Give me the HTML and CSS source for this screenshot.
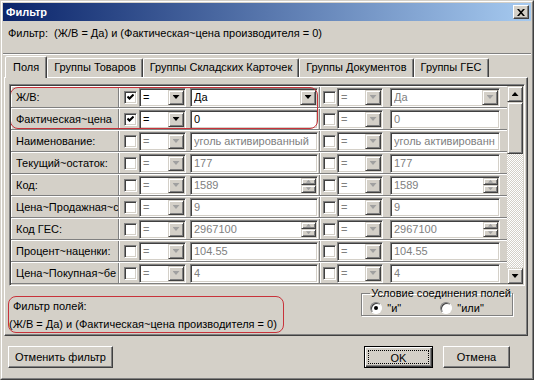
FILE: index.html
```html
<!DOCTYPE html>
<html lang="ru">
<head>
    <meta charset="UTF-8">
    <title>Фильтр</title>
    <link rel="stylesheet" href="styles.css">
</head>
<body>
<div class="window">
  <div class="frame">
    <div class="titlebar">
        <span class="title">Фильтр</span>
        <span class="close">
            <svg width="8" height="7" viewBox="0 0 8 7"><path d="M0 0h2l2 2.3L6 0h2L5 3.5 8 7H6L4 4.7 2 7H0l3-3.5z" fill="#000"/></svg>
        </span>
    </div>
    <div class="summary">Фильтр:&nbsp; (Ж/В = Да) и (Фактическая~цена производителя = 0)</div>
    <div class="divider"></div>

    <div class="tabs">
        <div class="tab active">Поля</div>
        <div class="tab">Группы Товаров</div>
        <div class="tab">Группы Складских Карточек</div>
        <div class="tab">Группы Документов</div>
        <div class="tab">Группы ГЕС</div>
    </div>

    <div class="panel">
        <div class="grid">
            <div class="rows">
                <div class="row">
                    <div class="name">Ж/В:</div>
                    <div class="cond first">
                        <span class="check"><svg width="7" height="7" viewBox="0 0 7 7"><path d="M0.5 2.5l2 2 4-4" stroke="#000" stroke-width="2" fill="none"/></svg></span>
                        <div class="combo"><span class="text">=</span><i class="drop"></i></div>
                        <div class="edit"><span class="text">Да</span><i class="drop"></i></div>
                    </div>
                    <div class="cond second">
                        <span class="check"></span>
                        <div class="combo off"><span class="text">=</span><i class="drop"></i></div>
                        <div class="edit off"><span class="text">Да</span><i class="drop"></i></div>
                    </div>
                </div>
                <div class="row">
                    <div class="name">Фактическая~цена</div>
                    <div class="cond first">
                        <span class="check"><svg width="7" height="7" viewBox="0 0 7 7"><path d="M0.5 2.5l2 2 4-4" stroke="#000" stroke-width="2" fill="none"/></svg></span>
                        <div class="combo"><span class="text">=</span><i class="drop"></i></div>
                        <div class="edit"><span class="text">0</span></div>
                    </div>
                    <div class="cond second">
                        <span class="check"></span>
                        <div class="combo off"><span class="text">=</span><i class="drop"></i></div>
                        <div class="edit off"><span class="text">0</span></div>
                    </div>
                </div>
                <div class="row">
                    <div class="name">Наименование:</div>
                    <div class="cond first">
                        <span class="check"></span>
                        <div class="combo off"><span class="text">=</span><i class="drop"></i></div>
                        <div class="edit off"><span class="text">уголь активированный</span></div>
                    </div>
                    <div class="cond second">
                        <span class="check"></span>
                        <div class="combo off"><span class="text">=</span><i class="drop"></i></div>
                        <div class="edit off"><span class="text">уголь активированн</span></div>
                    </div>
                </div>
                <div class="row">
                    <div class="name">Текущий~остаток:</div>
                    <div class="cond first">
                        <span class="check"></span>
                        <div class="combo off"><span class="text">=</span><i class="drop"></i></div>
                        <div class="edit off"><span class="text">177</span></div>
                    </div>
                    <div class="cond second">
                        <span class="check"></span>
                        <div class="combo off"><span class="text">=</span><i class="drop"></i></div>
                        <div class="edit off"><span class="text">177</span></div>
                    </div>
                </div>
                <div class="row">
                    <div class="name">Код:</div>
                    <div class="cond first">
                        <span class="check"></span>
                        <div class="combo off"><span class="text">=</span><i class="drop"></i></div>
                        <div class="edit off"><span class="text">1589</span><span class="spin"><i class="up"></i><i class="down"></i></span></div>
                    </div>
                    <div class="cond second">
                        <span class="check"></span>
                        <div class="combo off"><span class="text">=</span><i class="drop"></i></div>
                        <div class="edit off"><span class="text">1589</span><span class="spin"><i class="up"></i><i class="down"></i></span></div>
                    </div>
                </div>
                <div class="row">
                    <div class="name">Цена~Продажная~с</div>
                    <div class="cond first">
                        <span class="check"></span>
                        <div class="combo off"><span class="text">=</span><i class="drop"></i></div>
                        <div class="edit off"><span class="text">9</span></div>
                    </div>
                    <div class="cond second">
                        <span class="check"></span>
                        <div class="combo off"><span class="text">=</span><i class="drop"></i></div>
                        <div class="edit off"><span class="text">9</span></div>
                    </div>
                </div>
                <div class="row">
                    <div class="name">Код ГЕС:</div>
                    <div class="cond first">
                        <span class="check"></span>
                        <div class="combo off"><span class="text">=</span><i class="drop"></i></div>
                        <div class="edit off"><span class="text">2967100</span><span class="spin"><i class="up"></i><i class="down"></i></span></div>
                    </div>
                    <div class="cond second">
                        <span class="check"></span>
                        <div class="combo off"><span class="text">=</span><i class="drop"></i></div>
                        <div class="edit off"><span class="text">2967100</span><span class="spin"><i class="up"></i><i class="down"></i></span></div>
                    </div>
                </div>
                <div class="row">
                    <div class="name">Процент~наценки:</div>
                    <div class="cond first">
                        <span class="check"></span>
                        <div class="combo off"><span class="text">=</span><i class="drop"></i></div>
                        <div class="edit off"><span class="text">104.55</span></div>
                    </div>
                    <div class="cond second">
                        <span class="check"></span>
                        <div class="combo off"><span class="text">=</span><i class="drop"></i></div>
                        <div class="edit off"><span class="text">104.55</span></div>
                    </div>
                </div>
                <div class="row">
                    <div class="name">Цена~Покупная~бе</div>
                    <div class="cond first">
                        <span class="check"></span>
                        <div class="combo off"><span class="text">=</span><i class="drop"></i></div>
                        <div class="edit off"><span class="text">4</span></div>
                    </div>
                    <div class="cond second">
                        <span class="check"></span>
                        <div class="combo off"><span class="text">=</span><i class="drop"></i></div>
                        <div class="edit off"><span class="text">4</span></div>
                    </div>
                </div>
                <div class="marked"></div>
            </div>
            <div class="scrollbar">
                <span class="sb-btn up"></span>
                <span class="sb-thumb"></span>
                <span class="sb-track"></span>
                <span class="sb-btn down"></span>
            </div>
        </div>

        <div class="panel-bottom">
            <div class="fields-filter">
                <div class="ff-title">Фильтр полей:</div>
                <div class="ff-text">(Ж/В = Да) и (Фактическая~цена производителя = 0)</div>
            </div>
            <fieldset class="join">
                <legend>Условие соединения полей</legend>
                <label class="opt"><span class="radio checked"></span>"и"</label>
                <label class="opt"><span class="radio"></span>"или"</label>
            </fieldset>
        </div>
    </div>

    <div class="buttons">
        <button class="btn reset">Отменить фильтр</button>
        <button class="btn ok default"><span class="focus">OK</span></button>
        <button class="btn cancel">Отмена</button>
    </div>
  </div>
</div>
</body>
</html>
```

FILE: styles.css
```css
* {
    box-sizing: border-box;
}
body {
    margin: 0;
    font-family: "Liberation Sans", Arial, sans-serif;
    font-size: 11px;
    color: #000;
    background: #d4d0c8;
}
.window {
    width: 534px;
    height: 380px;
    background: #d4d0c8;
    border: 1px solid;
    border-color: #d4d0c8 #404040 #404040 #d4d0c8;
}
.frame {
    height: 100%;
    border: 1px solid;
    border-color: #fff #808080 #808080 #fff;
    padding: 1px;
    display: flex;
    flex-direction: column;
}

/* title bar */
.titlebar {
    height: 18px;
    flex-shrink: 0;
    display: flex;
    align-items: center;
    justify-content: space-between;
    padding: 0 2px 0 3px;
    background: linear-gradient(to right, #0a246a, #a6caf0);
    color: #fff;
    font-weight: bold;
}
.close {
    width: 16px;
    height: 14px;
    display: flex;
    align-items: center;
    justify-content: center;
    background: #d4d0c8;
    border: 1px solid;
    border-color: #fff #404040 #404040 #fff;
    box-shadow: inset -1px -1px #808080;
}

.summary {
    height: 32px;
    flex-shrink: 0;
    padding: 5px 5px 0;
    line-height: 14px;
}
.divider {
    height: 2px;
    flex-shrink: 0;
    border-top: 1px solid #808080;
    border-bottom: 1px solid #fff;
}

/* tabs */
.tabs {
    height: 21px;
    flex-shrink: 0;
    margin-top: 1px;
    padding-left: 2px;
    display: flex;
    align-items: flex-end;
    position: relative;
    z-index: 1;
}
.tab {
    height: 19px;
    line-height: 17px;
    padding: 0 6px;
    border: 1px solid;
    border-bottom: none;
    border-color: #fff #404040 transparent #fff;
    border-radius: 2px 2px 0 0;
    box-shadow: inset -1px 0 #808080;
    white-space: nowrap;
}
.tab.active {
    height: 22px;
    margin-bottom: -1px;
    padding: 0 7px;
    line-height: 20px;
    background: #d4d0c8;
}

.panel {
    margin-left: 1px;
    width: 524px;
    height: 259px;
    flex-shrink: 0;
    padding: 6px 0 0 4px;
    border: 1px solid;
    border-color: #fff #404040 #404040 #fff;
    box-shadow: inset -1px -1px #808080;
}

/* grid of fields */
.grid {
    width: 516px;
    height: 202px;
    display: flex;
    border: 1px solid;
    border-color: #808080 #fff #fff #808080;
    box-shadow: inset 1px 1px #404040, inset -1px -1px #d4d0c8;
    padding: 1px;
}
.rows {
    width: 496px;
    position: relative;
    overflow: hidden;
}
.row {
    height: 22px;
    display: flex;
    border-top: 1px solid #fff;
    border-bottom: 1px solid #808080;
}
.name {
    width: 108px;
    padding-left: 4px;
    line-height: 20px;
    white-space: nowrap;
    overflow: hidden;
    border-left: 1px solid #fff;
    border-right: 1px solid #808080;
}
.cond {
    display: flex;
    align-items: center;
}
.cond.first {
    width: 201px;
    padding: 0 2px 0 4px;
    border-left: 1px solid #fff;
    border-right: 1px solid #808080;
}
.cond.second {
    flex: 1;
    padding-left: 2px;
    border-left: 1px solid #fff;
}
.check {
    width: 13px;
    height: 13px;
    flex-shrink: 0;
    display: flex;
    align-items: center;
    justify-content: center;
    background: #fff;
    border: 1px solid;
    border-color: #808080 #fff #fff #808080;
    box-shadow: inset 1px 1px #404040, inset -1px -1px #d4d0c8;
}
.combo, .edit {
    height: 19px;
    display: flex;
    align-items: center;
    flex-shrink: 0;
    background: #fff;
    border: 1px solid;
    border-color: #808080 #fff #fff #808080;
    box-shadow: inset 1px 1px #404040, inset -1px -1px #d4d0c8;
    padding: 1px 1px 1px 3px;
}
.combo {
    width: 47px;
    margin-left: 2px;
}
.edit {
    width: 128px;
    margin-left: 4px;
}
.second .combo {
    width: 46px;
    margin-left: 1px;
}
.second .edit {
    width: 110px;
    margin-left: 7px;
}
.text {
    flex: 1;
    white-space: nowrap;
    overflow: hidden;
}
.off .text {
    color: #808080;
}
.drop {
    width: 16px;
    height: 15px;
    flex-shrink: 0;
    display: flex;
    align-items: center;
    justify-content: center;
    background: #d4d0c8;
    border: 1px solid;
    border-color: #d4d0c8 #404040 #404040 #d4d0c8;
    box-shadow: inset 1px 1px #fff, inset -1px -1px #808080;
}
.drop::after {
    content: "";
    width: 7px;
    height: 4px;
    background: #000;
    clip-path: polygon(0 0, 100% 0, 50% 100%);
}
.off .drop::after {
    background: #a0a0a0;
}
.spin {
    width: 15px;
    height: 15px;
    flex-shrink: 0;
    display: flex;
    flex-direction: column;
}
.spin i {
    flex: 1;
    display: flex;
    align-items: center;
    justify-content: center;
    background: #d4d0c8;
    border: 1px solid;
    border-color: #d4d0c8 #404040 #404040 #d4d0c8;
    box-shadow: inset 1px 1px #fff, inset -1px -1px #808080;
}
.spin i::after {
    content: "";
    width: 5px;
    height: 3px;
    background: #a0a0a0;
    clip-path: polygon(50% 0, 100% 100%, 0 100%);
}
.spin i.down::after {
    clip-path: polygon(0 0, 100% 0, 50% 100%);
}
.marked {
    position: absolute;
    left: -1px;
    top: 1px;
    width: 308px;
    height: 42px;
    border: 1px solid #c8323a;
    border-radius: 8px;
    pointer-events: none;
}

/* scrollbar */
.scrollbar {
    width: 16px;
    display: flex;
    flex-direction: column;
}
.sb-btn, .sb-thumb {
    background: #d4d0c8;
    border: 1px solid;
    border-color: #d4d0c8 #404040 #404040 #d4d0c8;
    box-shadow: inset 1px 1px #fff, inset -1px -1px #808080;
}
.sb-btn {
    height: 16px;
    display: flex;
    align-items: center;
    justify-content: center;
}
.sb-btn::after {
    content: "";
    width: 7px;
    height: 4px;
    background: #000;
    clip-path: polygon(50% 0, 100% 100%, 0 100%);
}
.sb-btn.down::after {
    clip-path: polygon(0 0, 100% 0, 50% 100%);
}
.sb-thumb {
    height: 52px;
}
.sb-track {
    flex: 1;
    background: repeating-conic-gradient(#fff 0 25%, #d4d0c8 0 50%) 0 0 / 2px 2px;
}

/* under the grid */
.panel-bottom {
    display: flex;
    justify-content: space-between;
    align-items: flex-start;
    padding: 0 14px 0 3px;
    margin-left: -4px;
}
.fields-filter {
    width: 276px;
    height: 37px;
    margin-top: 10px;
    line-height: 18px;
    border: 1px solid #c8323a;
    border-radius: 8px;
}
.ff-title {
    padding-left: 4px;
}
.join {
    width: 149px;
    height: 29px;
    margin: 1px 0 0;
    padding: 0 0 0 8px;
    border: 1px solid #808080;
    box-shadow: inset 1px 1px #fff, 1px 1px #fff;
    display: flex;
    align-items: center;
}
.join legend {
    padding: 0 1px;
    margin-left: 0;
    line-height: 13px;
    white-space: nowrap;
}
.opt {
    display: flex;
    align-items: center;
    width: 70px;
    gap: 5px;
}
.radio {
    width: 12px;
    height: 12px;
    border-radius: 50%;
    background: #fff;
    border: 1px solid;
    border-color: #808080 #fff #fff #808080;
    box-shadow: inset 1px 1px #404040;
    display: flex;
    align-items: center;
    justify-content: center;
}
.radio.checked::after {
    content: "";
    width: 4px;
    height: 4px;
    border-radius: 50%;
    background: #000;
}

/* dialog buttons */
.buttons {
    display: flex;
    padding: 10px 0 0 5px;
}
.btn {
    height: 22px;
    font-family: inherit;
    font-size: 11px;
    color: #000;
    background: #d4d0c8;
    border: 1px solid;
    border-color: #fff #404040 #404040 #fff;
    box-shadow: inset -1px -1px #808080;
    padding: 0;
}
.reset {
    width: 105px;
}
.ok {
    width: 69px;
    margin-left: auto;
}
.cancel {
    width: 67px;
    margin: 0 21px 0 10px;
}
.btn.default {
    border-color: #000;
    box-shadow: inset 1px 1px #fff, inset -1px -1px #404040, inset -2px -2px #808080;
    padding: 3px;
}
.focus {
    display: block;
    height: 100%;
    line-height: 14px;
    border: 1px dotted #000;
}
```
